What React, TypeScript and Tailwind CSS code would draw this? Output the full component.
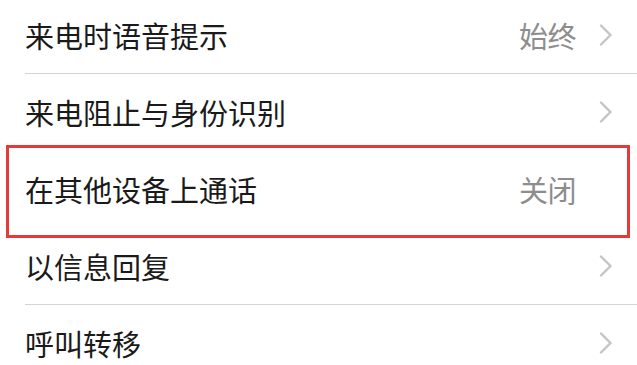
const rows = [
  { label: '来电时语音提示', value: '始终', arrow: true, line: true },
  { label: '来电阻止与身份识别', value: '', arrow: true, line: false },
  { label: '在其他设备上通话', value: '关闭', arrow: false, line: false },
  { label: '以信息回复', value: '', arrow: true, line: true },
  { label: '呼叫转移', value: '', arrow: true, line: false },
];

const Chevron = () => (
  <svg width="14" height="22" viewBox="0 0 14 22" className="shrink-0">
    <path d="M2 1.5 L11.5 11 L2 20.5" fill="none" stroke="#c4c4c6" strokeWidth="2.4" strokeLinecap="round" strokeLinejoin="round" />
  </svg>
);

export default function App() {
  return (
    <div
      className="relative w-[637px] h-[365px] overflow-hidden bg-white"
      style={{ fontFamily: '"Noto Sans CJK SC", "Noto Sans", sans-serif' }}
    >
      <div className="-mt-[3px] pl-[25px]">
        {rows.map((row) => (
          <div
            key={row.label}
            className={`flex items-center h-[77px] pr-[24px] ${row.line ? 'border-b border-[#d4d4d4]' : 'border-b border-transparent'}`}
          >
            <span className="flex-1 text-[29px] text-[#1a1a1a] leading-none">{row.label}</span>
            {row.value && (
              <span className="text-[29px] text-[#8d8d8d] leading-none tracking-[-0.5px]">{row.value}</span>
            )}
            <span className="w-[37px] flex justify-end">{row.arrow && <Chevron />}</span>
          </div>
        ))}
      </div>
      <div className="absolute left-[6px] top-[145px] w-[624px] h-[93px] border-[3px] border-[#e53a3a]" />
    </div>
  );
}
